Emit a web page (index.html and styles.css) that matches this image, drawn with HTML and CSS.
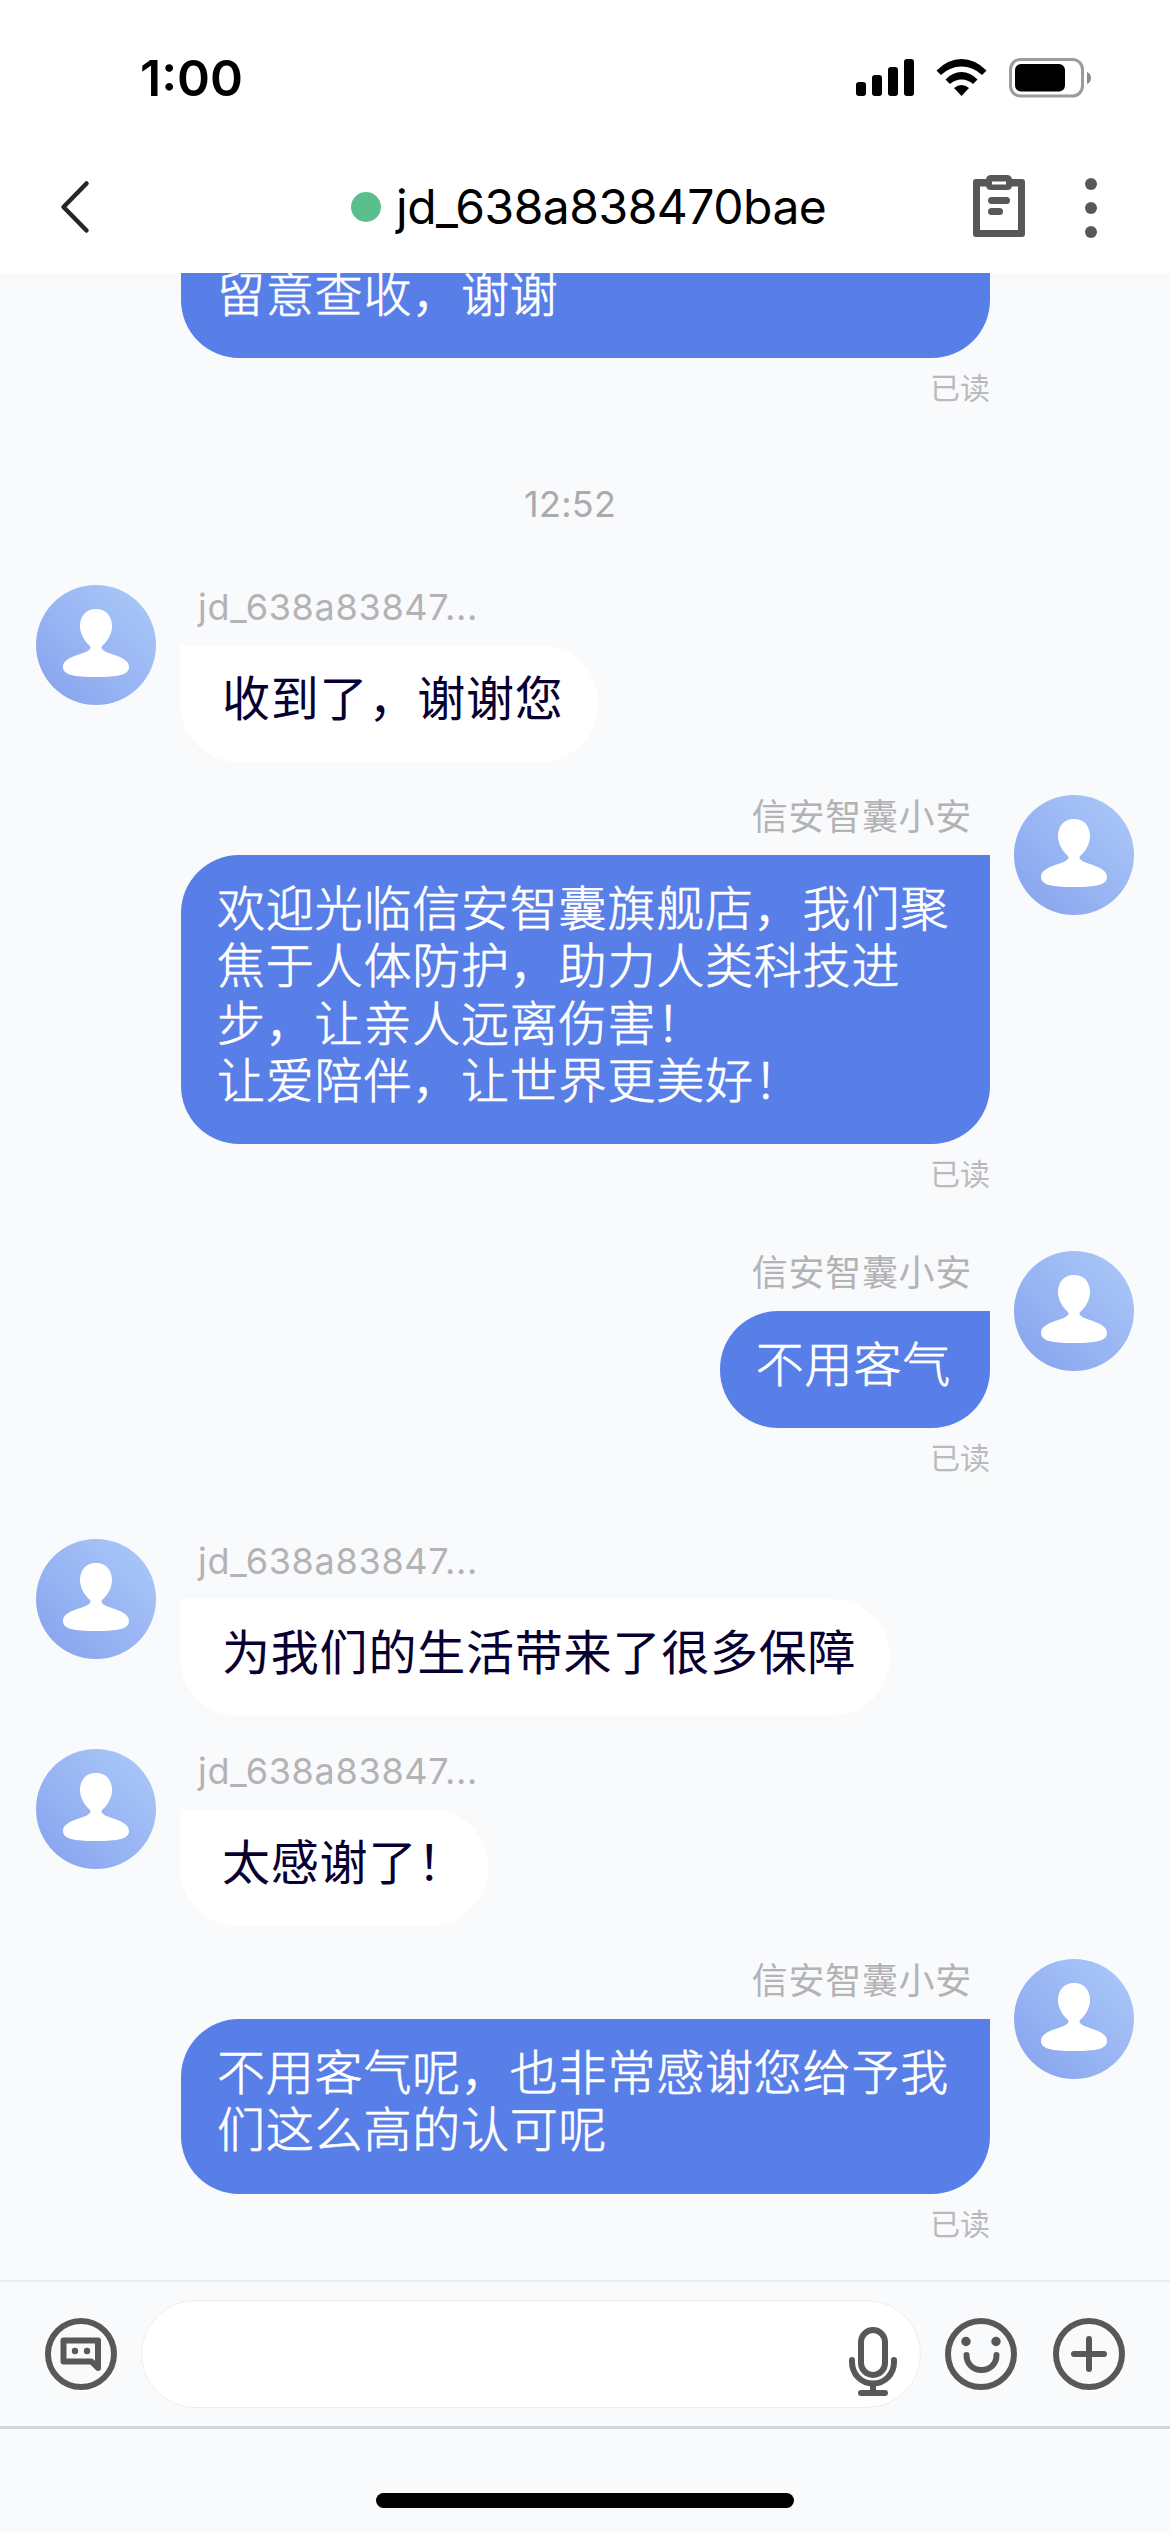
FILE: index.html
```html
<!DOCTYPE html>
<html lang="zh-CN">
<head>
<meta charset="utf-8">
<title>jd_638a838470bae</title>
<link rel="stylesheet" href="styles.css">
</head>
<body>
<svg class="defs" width="0" height="0" aria-hidden="true">
  <defs>
    <linearGradient id="avatar-fill" x1="0.1" y1="0.9" x2="0.9" y2="0.1">
      <stop offset="0" stop-color="#89a6ef"/>
      <stop offset="1" stop-color="#a9c6f8"/>
    </linearGradient>
    <symbol id="avatar" viewBox="0 0 120 120">
      <circle cx="60" cy="60" r="60" fill="url(#avatar-fill)"/>
      <path fill="#fff" d="M60 24C50 24 44 31 44 41C44 49 48.500 56 53.500 60.500Q55.500 62.500 53.500 64.500C48 70 27 71 27 82C27 90 38 92 60 92C82 92 93 90 93 82C93 71 72 70 66.500 64.500Q64.500 62.500 66.500 60.500C71.500 56 76 49 76 41C76 31 70 24 60 24Z"/>
    </symbol>
  </defs>
</svg>
<div class="screen">
  <header class="header">
    <div class="status">
      <span class="clock">1:00</span>
      <svg class="status-icons" width="236" height="40" viewBox="0 0 236 40">
        <rect x="0" y="24" width="10" height="14" rx="3"/>
        <rect x="16" y="17" width="10" height="21" rx="3"/>
        <rect x="32" y="9" width="10" height="29" rx="3"/>
        <rect x="48" y="1" width="10" height="37" rx="3"/>
        <path d="M80.500 12.500Q92 1 105.500 1Q119 1 130.500 12.500L126 17Q117 8.500 105.500 8.500Q94 8.500 85 17Z"/>
        <path d="M89.500 21.500Q96.500 14 105.500 14Q114.500 14 121.500 21.500L117 26Q112 21.500 105.500 21.500Q99 21.500 94 26Z"/>
        <path d="M98 30Q105.500 24 113 30L105.500 38Z"/>
        <rect x="154.500" y="1.500" width="72" height="36.500" rx="10" fill="none" stroke="#9b9b9b" stroke-width="3"/>
        <rect x="159" y="6" width="50" height="27.500" rx="6"/>
        <path d="M231 14Q235 15.500 235 20Q235 24.500 231 26Z" fill="#8a8a8a"/>
      </svg>
    </div>
    <div class="nav">
      <svg class="back" width="30" height="54" viewBox="0 0 30 54"><path d="M26.500 3.500L3.500 27L26.500 50.500" fill="none" stroke="#262626" stroke-width="4.500" stroke-linecap="round" stroke-linejoin="round"/></svg>
      <div class="title"><i class="online"></i><span class="title-text">jd_638a838470bae</span></div>
      <svg class="tools" width="126" height="64" viewBox="0 0 126 64" fill="#585858">
        <path fill-rule="evenodd" d="M3 4H13Q14 0 18 0H34Q38 0 39 4H49Q52 4 52 7V59Q52 62 49 62H3Q0 62 0 59V7Q0 4 3 4ZM7 11.500V55H45V11.500H39Q38 15 34 15H18Q14 15 13 11.500ZM19 6.500V9.500H33V6.500Z"/>
        <rect x="15" y="22" width="22" height="7" rx="3.500"/>
        <rect x="15" y="33" width="15" height="7" rx="3.500"/>
        <circle cx="118" cy="9" r="6"/><circle cx="118" cy="33" r="6"/><circle cx="118" cy="57" r="6"/>
      </svg>
    </div>
  </header>

  <main class="chat">
    <div class="row sent continued">
      <div class="body">
        <div class="bubble full">留意查收，谢谢</div>
        <div class="read">已读</div>
      </div>
    </div>
    <div class="time">12:52</div>
    <div class="row received">
      <svg class="avatar"><use href="#avatar"/></svg>
      <div class="body">
        <div class="name">jd_638a83847...</div>
        <div class="bubble">收到了，谢谢您</div>
      </div>
    </div>
    <div class="row sent long">
      <div class="body">
        <div class="name">信安智囊小安</div>
        <div class="bubble full">欢迎光临信安智囊旗舰店，我们聚<br>焦于人体防护，助力人类科技进<br>步，让亲人远离伤害！<br>让爱陪伴，让世界更美好！</div>
        <div class="read">已读</div>
      </div>
      <svg class="avatar"><use href="#avatar"/></svg>
    </div>
    <div class="row sent">
      <div class="body">
        <div class="name">信安智囊小安</div>
        <div class="bubble">不用客气</div>
        <div class="read">已读</div>
      </div>
      <svg class="avatar"><use href="#avatar"/></svg>
    </div>
    <div class="row received">
      <svg class="avatar"><use href="#avatar"/></svg>
      <div class="body">
        <div class="name">jd_638a83847...</div>
        <div class="bubble">为我们的生活带来了很多保障</div>
      </div>
    </div>
    <div class="row received">
      <svg class="avatar"><use href="#avatar"/></svg>
      <div class="body">
        <div class="name">jd_638a83847...</div>
        <div class="bubble exclaim">太感谢了！</div>
      </div>
    </div>
    <div class="row sent">
      <div class="body">
        <div class="name">信安智囊小安</div>
        <div class="bubble full">不用客气呢，也非常感谢您给予我<br>们这么高的认可呢</div>
        <div class="read">已读</div>
      </div>
      <svg class="avatar"><use href="#avatar"/></svg>
    </div>
  </main>

  <footer class="composer">
    <svg class="icon" width="72" height="72" viewBox="0 0 72 72">
      <circle cx="36" cy="36" r="33"/>
      <path d="M18.500 22.500H53V50L46.500 43.500H18.500Z"/>
      <circle class="solid" cx="30" cy="33" r="3.200"/><circle class="solid" cx="42" cy="33" r="3.200"/>
    </svg>
    <div class="input">
      <svg class="icon mic" width="48" height="70" viewBox="0 0 48 70">
        <rect x="12" y="3" width="24" height="45" rx="12"/>
        <path d="M3 33V35C3 47 12 56.500 24 56.500C36 56.500 45 47 45 35V33M24 57V65M12 66H36"/>
      </svg>
    </div>
    <svg class="icon" width="72" height="72" viewBox="0 0 72 72">
      <circle cx="36" cy="36" r="33"/>
      <circle class="solid" cx="21" cy="23.500" r="4.700"/><circle class="solid" cx="51" cy="23.500" r="4.700"/>
      <path d="M21.500 37C21.500 46 28 52 36.500 52C45 52 51.500 46 51.500 37"/>
    </svg>
    <svg class="icon plus" width="72" height="72" viewBox="0 0 72 72">
      <circle cx="36" cy="36" r="33"/>
      <path d="M36 21V51M21 36H51"/>
    </svg>
  </footer>
  <div class="home"><div class="indicator"></div></div>
</div>
</body>
</html>
```
FILE: styles.css
```css
* { box-sizing: border-box; }
body {
  margin: 0;
  background: #f9fafc;
  font-family: Inter, "Noto Sans CJK SC", sans-serif;
}
svg { display: block; flex: none; }
.defs { position: absolute; }
.screen {
  display: flex;
  flex-direction: column;
  width: 1170px;
  height: 2532px;
  overflow: hidden;
}
.header { height: 273px; background: #fff; flex: none; }
.status {
  display: flex;
  justify-content: space-between;
  align-items: center;
  height: 156px;
  padding: 0 78px 0 140px;
}
.clock { font-size: 50px; font-weight: 600; line-height: 60px; }
.nav {
  display: flex;
  align-items: center;
  height: 102px;
  padding: 0 71px 0 60px;
}
.title {
  display: flex;
  flex: 1;
  align-items: center;
  gap: 15px;
  padding-left: 261px;
}
.online { width: 30px; height: 30px; border-radius: 50%; background: #5bbf8d; }
.title-text { font-size: 48px; line-height: 60px; letter-spacing: -0.5px; white-space: nowrap; }

.chat {
  display: flex;
  flex-direction: column;
  height: 2007px;
  flex: none;
  overflow: hidden;
}
.row { display: flex; gap: 24px; padding: 0 36px; flex: none; }
.received { height: 210px; }
.sent { height: 288px; justify-content: flex-end; }
.sent.long { height: 456px; }
.sent.continued { height: 194px; margin-top: -32px; padding-right: 180px; }
.body { display: flex; flex-direction: column; align-items: flex-start; }
.sent .body { align-items: flex-end; }
.avatar { width: 120px; height: 120px; }
.name {
  height: 60px;
  padding: 0 18px;
  color: #b3b3b5;
  font-size: 36px;
  line-height: 45px;
  letter-spacing: 0.7px;
  white-space: nowrap;
}
.bubble {
  padding: 25px 34px 35px 42px;
  border-radius: 0 58px 58px 58px;
  background: #fff;
  color: #080030;
  font-size: 48px;
  line-height: 57.300px;
  letter-spacing: 0.8px;
  white-space: nowrap;
}
.sent .bubble {
  padding-left: 36px;
  padding-right: 39px;
  border-radius: 58px 0 58px 58px;
  background: #587ee8;
  color: #fff;
  font-weight: 300;
  -webkit-text-stroke: 0.7px #fff;
}
.sent .bubble.full { width: 809px; padding-right: 0; }
.continued .bubble.full { border-radius: 0 0 58px 58px; }
.bubble.exclaim { width: 308px; padding-right: 0; }
.read { color: #bababc; font-size: 30px; line-height: 36px; margin-top: 12px; }
.time {
  height: 150px;
  padding: 47px 0 0 524px;
  color: #ababad;
  font-size: 36px;
  line-height: 44px;
  letter-spacing: 0.3px;
}

.composer {
  display: flex;
  align-items: center;
  height: 149px;
  flex: none;
  padding: 0 45px;
  border-top: 2px solid #ecedef;
  border-bottom: 3px solid #d5d6d8;
}
.icon { fill: none; stroke: #585858; stroke-width: 6; stroke-linecap: round; stroke-linejoin: round; }
.icon .solid { fill: #585858; stroke: none; }
.input {
  display: flex;
  justify-content: flex-end;
  width: 780px;
  height: 108px;
  margin: 0 24px;
  padding: 26px 23px 0 0;
  border: 1px solid #ecedef;
  border-radius: 54px;
  background: #fff;
}
.plus { margin-left: 36px; }
.home { display: flex; justify-content: center; padding-top: 64px; }
.indicator { width: 418px; height: 15px; border-radius: 8px; background: #000; }
```
